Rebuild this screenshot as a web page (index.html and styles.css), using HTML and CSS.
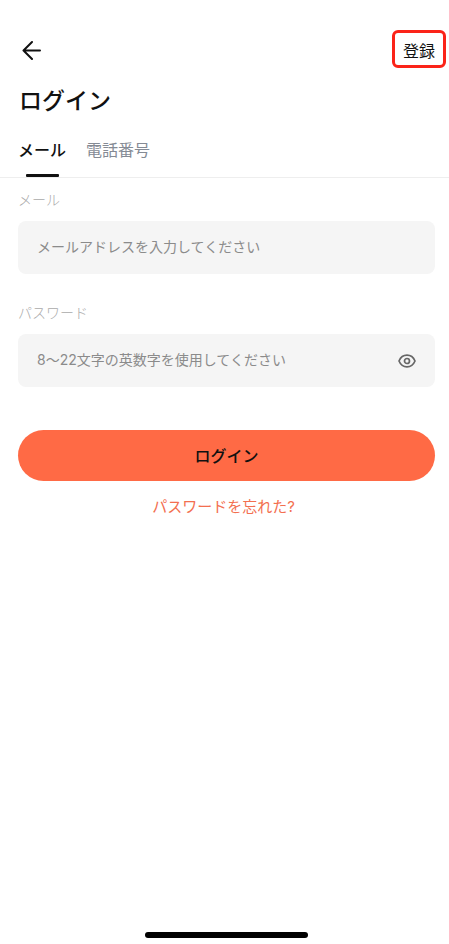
FILE: index.html
```html
<!DOCTYPE html>
<html lang="ja">
<head>
<meta charset="utf-8">
<meta name="viewport" content="width=device-width, initial-scale=1">
<title>ログイン</title>
<link rel="stylesheet" href="styles.css">
</head>
<body>
<div class="screen">
  <header class="topbar">
    <button class="icon-button" type="button" aria-label="戻る">
      <svg width="20" height="22" viewBox="0 0 20 22" fill="none" stroke="currentColor" stroke-width="2" stroke-linecap="round" stroke-linejoin="round"><path d="M18 12.500H1.500M10 4L1.500 12.500l8.500 8.500"/></svg>
    </button>
    <a class="register" href="#register">登録</a>
  </header>
  <h1 class="title">ログイン</h1>
  <nav class="tabs">
    <a class="tab tab-active" href="#mail" aria-current="page">メール</a>
    <a class="tab" href="#phone">電話番号</a>
  </nav>
  <form class="form">
    <label class="label" for="mail">メール</label>
    <div class="field">
      <input class="input" id="mail" type="email" placeholder="メールアドレスを入力してください">
    </div>
    <label class="label" for="password">パスワード</label>
    <div class="field">
      <input class="input" id="password" type="password" placeholder="8〜22文字の英数字を使用してください">
      <button class="icon-button eye" type="button" aria-label="パスワードを表示">
        <svg width="18" height="14" viewBox="0 0 18 14" fill="none" stroke="currentColor" stroke-width="1.700" stroke-linejoin="round"><path d="M1 7C2.600 3.200 5.500 1.200 9 1.200S15.400 3.200 17 7c-1.600 3.800-4.500 5.800-8 5.800S2.600 10.800 1 7z"/><circle cx="9" cy="7" r="2.500"/></svg>
      </button>
    </div>
    <button class="submit" type="submit">ログイン</button>
    <a class="forgot" href="#forgot">パスワードを忘れた?</a>
  </form>
  <footer class="footer"><div class="home-bar"></div></footer>
</div>
</body>
</html>
```
FILE: styles.css
```css
* { box-sizing: border-box; }
body {
  margin: 0;
  background: #fff;
  color: #111;
  font-family: Inter, "Noto Sans CJK JP", sans-serif;
  font-size: 14px;
  line-height: 20px;
}
a { color: inherit; text-decoration: none; }
button, input { font: inherit; border: 0; padding: 0; background: none; }
.screen {
  display: flex;
  flex-direction: column;
  min-height: 100vh;
  padding: 30px 0 6px;
}
.topbar {
  display: flex;
  justify-content: space-between;
  align-items: center;
  padding: 0 3px 0 22px;
}
.icon-button { display: flex; color: #111; cursor: pointer; }
.register {
  padding: 8px 8px 4px;
  border: 3px solid #fb2318;
  border-radius: 6px;
  font-size: 16px;
  line-height: 20px;
}
.title {
  margin: 17px 19px 0;
  font-size: 23px;
  line-height: 32px;
  font-weight: 500;
}
.tabs {
  display: flex;
  gap: 20px;
  margin-top: 21px;
  padding: 0 18px;
  border-bottom: 1px solid #eee;
  font-size: 16px;
  line-height: 24px;
  color: #858b95;
}
.tab { display: flex; flex-direction: column; align-items: center; padding-bottom: 15px; }
.tab-active { padding-bottom: 0; color: #111; font-weight: 500; }
.tab-active::after {
  content: "";
  width: 33px;
  height: 3px;
  margin-top: 12px;
  border-radius: 1px;
  background: #111;
}
.form { display: flex; flex-direction: column; padding: 12px 14px 0 18px; }
.label { color: #aaa; font-weight: 300; }
.field {
  display: flex;
  align-items: center;
  height: 53px;
  margin: 11px 0 29px;
  padding: 0 19px;
  border-radius: 8px;
  background: #f5f5f5;
}
.input { flex: 1; min-width: 0; padding-bottom: 2px; outline: 0; color: #111; }
.input::placeholder { color: #8b8b8b; opacity: 1; }
.eye { color: #666; }
.submit {
  height: 51px;
  margin-top: 14px;
  border-radius: 26px;
  background: #ff6a45;
  color: #111;
  font-size: 16px;
  font-weight: 500;
}
.forgot {
  margin: 15px 6px 0 0;
  text-align: center;
  color: #f36f50;
  font-size: 15px;
  line-height: 22px;
}
.footer { margin-top: auto; padding: 0 14px 0 18px; }
.home-bar {
  width: 39%;
  height: 6px;
  margin: 0 auto;
  border-radius: 3px;
  background: #000;
}
```
